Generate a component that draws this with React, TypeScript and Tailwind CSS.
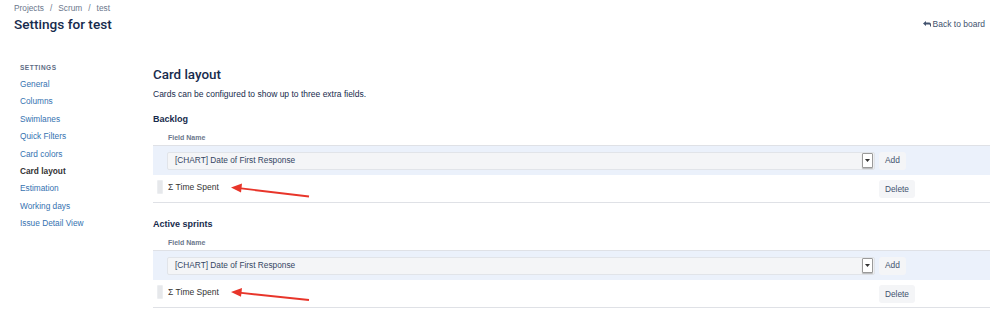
import React from "react";

const sidebar = [
  "General",
  "Columns",
  "Swimlanes",
  "Quick Filters",
  "Card colors",
  "Card layout",
  "Estimation",
  "Working days",
  "Issue Detail View",
];

function Section({ title, first }: { title: string; first?: boolean }) {
  return (
    <div className={first ? "mt-[13px]" : "mt-[15px]"}>
      <div className="text-[9px] leading-[12px] font-bold text-[#172b4d]">{title}</div>
      <div
        className={
          first
            ? "mt-[8px] pb-[2px] border-b border-[#dfe1e6] pl-[15px] text-[7px] leading-[10px] font-bold text-[#6b778c]"
            : "mt-[8px] pb-[2px] border-b border-[#dfe1e6] pl-[15px] text-[7px] leading-[10px] font-bold text-[#6b778c]"
        }
      >
        Field Name
      </div>
      <div className="flex h-[29px] items-center bg-[#ebf1fb]">
        <div className="w-[14px]" />
        <div className="flex h-[18px] flex-1 items-center justify-between rounded-[2px] border border-[#e1e4e9] bg-[#f4f5f7] pl-[7px] pr-[1px]">
          <span className="text-[8.3px] text-[#344563]">[CHART] Date of First Response</span>
          <span className="flex h-[15px] w-[11px] items-center justify-center rounded-[1px] border border-[#9a9a9a] bg-white shadow-[0_1px_1px_rgba(0,0,0,0.25)]">
            <svg width="5" height="3" viewBox="0 0 5 3">
              <path d="M0 0 L5 0 L2.5 3 Z" fill="#333" />
            </svg>
          </span>
        </div>
        <div className="flex w-[115px] items-center pl-[4px]">
          <span className="flex h-[18px] items-center rounded-[3px] bg-[#f4f5f7] px-[6px] text-[8.4px] text-[#42526e]">
            Add
          </span>
        </div>
      </div>
      <div className="flex h-[28px] items-start border-b border-[#dfe1e6] bg-white">
        <div className="w-[14px] pl-[4px] pt-[5px]">
          <div className="h-[14px] w-[6px] rounded-[1px] border border-[#eceef1] bg-[#e6e8eb]" />
        </div>
        <div className="flex-1 pl-[1px] pt-[5.5px] text-[8.5px] leading-[12px] text-[#333]">Σ Time Spent</div>
        <div className="flex w-[115px] pl-[4px] pt-[5px]">
          <span className="flex h-[18px] items-center rounded-[3px] bg-[#f4f5f7] px-[6px] text-[8.3px] text-[#42526e]">
            Delete
          </span>
        </div>
      </div>
    </div>
  );
}

export default function App() {
  return (
    <div
      className="relative h-[323px] w-[998px] overflow-hidden bg-white"
      style={{ fontFamily: '"Liberation Sans", Arial, sans-serif' }}
    >
      <div className="flex justify-between pl-[14px] pr-[13px] pt-[1px]">
        <div>
          <div className="flex text-[8.3px] leading-[14px] text-[#6b778c]">
            <span>Projects</span>
            <span className="px-[6px]">/</span>
            <span>Scrum</span>
            <span className="px-[6px]">/</span>
            <span>test</span>
          </div>
          <div
            className="text-[13.6px] leading-[18px] font-medium text-[#172b4d]"
            style={{ fontFamily: "Roboto, Arial, sans-serif" }}
          >
            Settings for test
          </div>
        </div>
        <div className="mt-[17px] flex h-[12px] items-center gap-[2px] text-[8.5px] text-[#42526e]">
          <svg width="8" height="6" viewBox="0 0 8 6">
            <path d="M0 2.5 L3 0 L3 1.6 L6.2 1.6 Q8 1.6 8 3.6 L8 5.5 L7 5.5 L7 4 Q7 3.4 6.2 3.4 L3 3.4 L3 5 Z" fill="#42526e" />
          </svg>
          <span>Back to board</span>
        </div>
      </div>

      <div className="flex">
        <div className="w-[153px] shrink-0 pl-[20px] pt-[29px]">
          <div className="text-[6.5px] leading-[12px] font-bold tracking-[0.5px] text-[#5e6c84]">SETTINGS</div>
          <div className="mt-[2px]">
            {sidebar.map((s) => (
              <div
                key={s}
                className={
                  s === "Card layout"
                    ? "text-[8.3px] leading-[17.4px] font-bold text-[#333]"
                    : "text-[8.3px] leading-[17.4px] text-[#3572b0]"
                }
              >
                {s}
              </div>
            ))}
          </div>
        </div>

        <div className="flex-1 pr-[8px] pt-[33px]">
          <div
            className="text-[13.4px] leading-[18px] font-medium text-[#172b4d]"
            style={{ fontFamily: "Roboto, Arial, sans-serif" }}
          >
            Card layout
          </div>
          <div className="mt-[4px] text-[8.5px] leading-[12px] text-[#172b4d]">
            Cards can be configured to show up to three extra fields.
          </div>
          <Section title="Backlog" first />
          <Section title="Active sprints" />
        </div>
      </div>

      <svg className="pointer-events-none absolute left-0 top-0" width="998" height="323" viewBox="0 0 998 323">
        <line x1="309" y1="196.5" x2="239" y2="188.2" stroke="#e8352a" strokeWidth="1.8" />
        <path d="M231 187.5 L242 183.6 L241 192.4 Z" fill="#e8352a" />
        <line x1="309" y1="300" x2="239" y2="292.7" stroke="#e8352a" strokeWidth="1.8" />
        <path d="M231 292 L242 288 L241 296.8 Z" fill="#e8352a" />
      </svg>
    </div>
  );
}
